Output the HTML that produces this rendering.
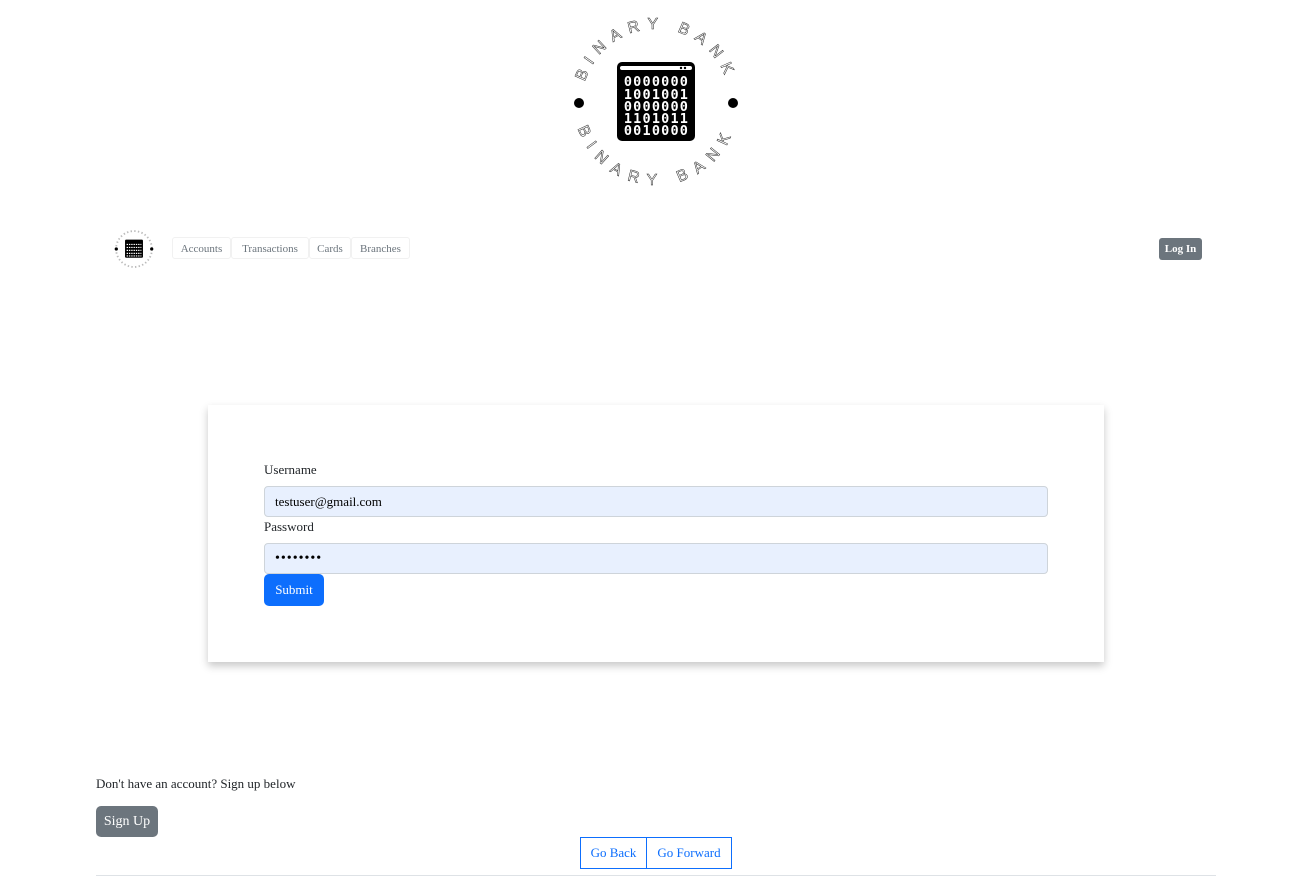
<!DOCTYPE html>
<html><head><meta charset="utf-8"><style>
body{margin:0;width:1303px;height:880px;background:#fff;font-family:"Liberation Serif",serif;color:#212529;position:relative;overflow:hidden}
.a{position:absolute}
.nav a{position:absolute;top:237px;height:22px;line-height:22px;font-size:11px;color:#6c757d;border:1px solid #f1f1f1;border-radius:3px;text-align:center;box-sizing:border-box}
.card{left:208px;top:405px;width:896px;height:257px;box-shadow:0 4px 8px rgba(0,0,0,.22);background:#fff}
.lbl{font-size:13px;left:264px}
.inp{left:264px;width:784px;height:31px;box-sizing:border-box;border:1px solid #ced4da;border-radius:4px;background:#e8f0fe;font-size:13px;padding-left:10px;line-height:29px;color:#000}
</style></head><body>
<svg class="a" style="left:556px;top:3px" width="200" height="200" viewBox="0 0 200 200">
<defs>
<path id="top" d="M26,100 A74,74 0 0 1 174,100"/>
<path id="bot" d="M18,100 A82,82 0 0 0 182,100"/>
</defs>
<text font-family="Liberation Sans,sans-serif" font-size="16" fill="none" stroke="#222" stroke-width="0.5" letter-spacing="7.5"><textPath href="#top" startOffset="50%" text-anchor="middle">BINARY BANK</textPath></text>
<text font-family="Liberation Sans,sans-serif" font-size="16" fill="none" stroke="#222" stroke-width="0.5" letter-spacing="9"><textPath href="#bot" startOffset="50%" text-anchor="middle">BINARY BANK</textPath></text>
<circle cx="23" cy="100" r="5" fill="#000"/><circle cx="177" cy="100" r="5" fill="#000"/>
<rect x="61" y="59" width="78" height="79" rx="5" fill="#000"/>
<rect x="64" y="63" width="72" height="4" rx="2" fill="#fff"/>
<circle cx="125" cy="65" r="1.2" fill="#000"/><circle cx="129" cy="65" r="1.2" fill="#000"/>
<g font-family="DejaVu Sans Mono,monospace" font-weight="bold" font-size="13.5" fill="#fff" text-anchor="middle" letter-spacing="1.2">
<text x="100.5" y="83">0000000</text>
<text x="100.5" y="96">1001001</text>
<text x="100.5" y="108">0000000</text>
<text x="100.5" y="120">1101011</text>
<text x="100.5" y="132">0010000</text>
</g>
</svg>
<svg class="a" style="left:111px;top:226px" width="46" height="46" viewBox="0 0 200 200">
<circle cx="100" cy="100" r="78" fill="none" stroke="#bbb" stroke-width="8" stroke-dasharray="6 10"/>
<circle cx="23" cy="100" r="7" fill="#000"/><circle cx="177" cy="100" r="7" fill="#000"/>
<rect x="61" y="59" width="78" height="79" rx="5" fill="#000"/>
<g stroke="#fff" stroke-width="5" stroke-dasharray="6 4"><line x1="68" y1="80" x2="132" y2="80"/><line x1="68" y1="93" x2="132" y2="93"/><line x1="68" y1="106" x2="132" y2="106"/><line x1="68" y1="119" x2="132" y2="119"/><line x1="68" y1="130" x2="132" y2="130"/></g>
</svg>
<div class="nav">
<a style="left:172px;width:59px">Accounts</a>
<a style="left:231px;width:78px">Transactions</a>
<a style="left:309px;width:42px">Cards</a>
<a style="left:351px;width:59px">Branches</a>
</div>
<div class="a" style="left:1159px;top:238px;width:43px;height:22px;background:#6c757d;border-radius:3px;color:#fff;font-size:11px;font-weight:bold;text-align:center;line-height:22px">Log In</div>
<div class="a card"></div>
<div class="a lbl" style="top:462px">Username</div>
<div class="a inp" style="top:486px">testuser@gmail.com</div>
<div class="a lbl" style="top:519px">Password</div>
<div class="a inp" style="top:543px;font-size:14px;letter-spacing:1px">••••••••</div>
<div class="a" style="left:264px;top:574px;width:60px;height:32px;background:#0d6efd;border-radius:5px;color:#fff;font-size:13px;text-align:center;line-height:31px">Submit</div>
<div class="a" style="left:96px;top:776px;font-size:13px">Don't have an account? Sign up below</div>
<div class="a" style="left:96px;top:806px;width:62px;height:31px;background:#6c757d;border-radius:5px;color:#fff;font-size:14px;text-align:center;line-height:31px">Sign Up</div>
<div class="a" style="left:580px;top:837px;width:67px;height:32px;box-sizing:border-box;border:1px solid #0d6efd;color:#0d6efd;font-size:13px;text-align:center;line-height:30px">Go Back</div>
<div class="a" style="left:646px;top:837px;width:86px;height:32px;box-sizing:border-box;border:1px solid #0d6efd;color:#0d6efd;font-size:13px;text-align:center;line-height:30px">Go Forward</div>
<div class="a" style="left:96px;top:875px;width:1120px;height:1px;background:#dee2e6"></div>
</body></html>
